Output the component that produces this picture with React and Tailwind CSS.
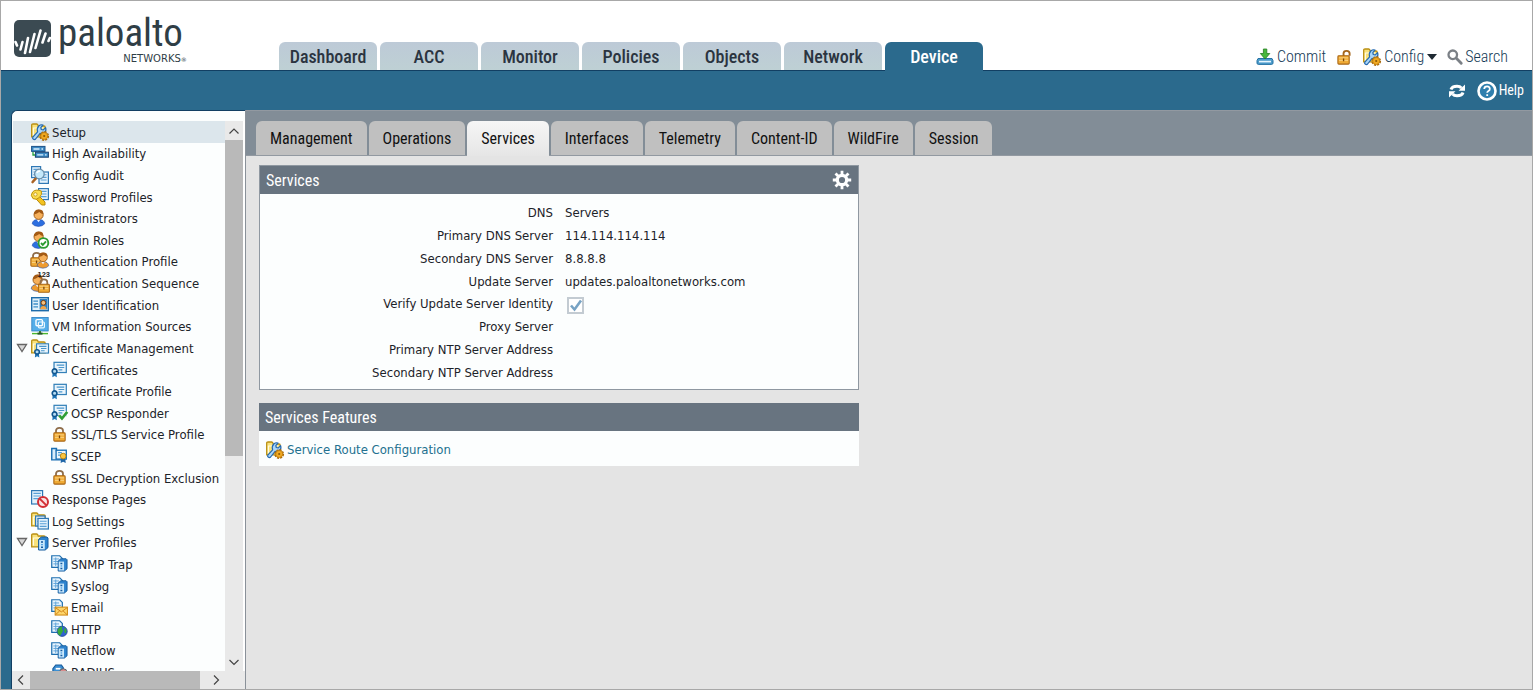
import React from 'react';

/* ---------- icon parts (18 x 18 grid) ---------- */

function Svg({ children, className = 'h-[18px] w-[18px]' }) {
  return (
    <svg viewBox="0 0 18 18" className={`${className} shrink-0 overflow-visible`} fill="none" aria-hidden="true">
      {children}
    </svg>
  );
}

const Folder = () => (
  <>
    <path d="M.7 13.8V2.2Q.7 1 2 1h3.6q1 0 1.4 1.2l.3.8H13q1.200 0 1.200 1.200v9.600z" fill="#f9e27a" stroke="#b98f12" strokeWidth="1.300" />
    <path d="M2.400 12.500V5h10" stroke="#fffbe0" strokeWidth="1.200" />
  </>
);

const Gear = ({ x = 13.2, y = 13 }) => (
  <g transform={`translate(${x} ${y})`}>
    <circle r="3.600" stroke="#a8690a" strokeWidth="2.600" strokeDasharray="1.900 .9" />
    <circle r="3.500" fill="#f1a921" stroke="#c07d0c" strokeWidth=".8" />
    <circle r="1.100" fill="#8d5a05" />
  </g>
);

const Sheet = ({ x = 0, y = 0, w = 10, h = 12 }) => (
  <g transform={`translate(${x} ${y})`}>
    <rect x=".6" y=".6" width={w} height={h} fill="#e4f2fc" stroke="#2f78b5" strokeWidth="1.2" />
    <path d={`M2.4 3.4h${w - 3.6}M2.4 6h${w - 3.6}M2.4 8.6h${w - 3.6}`} stroke="#5aa0d6" strokeWidth="1.1" />
  </g>
);

const Grid = () => (
  <>
    <path d="M.8.8h8.4L12 3.6V13H.8z" fill="#e8f5fe" stroke="#1e6fb0" strokeWidth="1.3" />
    <path d="M2.5 4.2h6M2.5 6.8h8M2.5 9.4h8M5 2.6v9" stroke="#5ba3d9" strokeWidth="1" />
  </>
);

const Server = () => (
  <>
    <path d="M7.600 6.400 10.400 4H16l1 1v9.600L14.200 17H7.600z" fill="#2e84cf" stroke="#155b9c" />
    <path d="M8.200 7h5.600v9.400H8.200z" fill="#c8e7fb" />
    <path d="M10 9h2M10 14.300h2" stroke="#145a9e" strokeWidth="1.400" />
    <path d="M10.200 11.600h1.600" stroke="#3c95dd" strokeWidth="1.200" />
  </>
);

const Ribbon = ({ x = 3.6, y = 11 }) => (
  <g transform={`translate(${x} ${y})`}>
    <path d="M-2 1.5-2.4 6.4 0 5l2.4 1.4L2 1.5z" fill="#1f76b8" />
    <circle r="2.5" fill="#b6dcf3" stroke="#11568f" strokeWidth="1.7" />
  </g>
);

const Cert = ({ x = 0, y = 0 }) => (
  <g transform={`translate(${x} ${y})`}>
    <rect x="3.2" y="1.4" width="13" height="10.8" fill="#eaf5fc" stroke="#3380b8" strokeWidth="1.3" />
    <path d="M6 4.4h8M8 6.9h6M8 9.4h4" stroke="#4a96cb" strokeWidth="1.2" />
    <Ribbon x={3.8} y={10.8} />
  </g>
);

const Person = ({ x = 0, y = 0, shirt = '#2c6fe0', s = 1 }) => (
  <g transform={`translate(${x} ${y}) scale(${s})`}>
    <path d="M1.200 14.800Q1.600 10.400 7.400 10.400t6.300 4.400Q11.600 17.400 7.400 17.400t-6.200-2.600z" fill={shirt} stroke="#1e4aa8" strokeWidth=".6" />
    <path d="M5.400 10.200 7.500 13.200l2.200-3z" fill="#eef4ff" />
    <circle cx="7.600" cy="5.800" r="4.600" fill="#f6b05a" stroke="#9a5710" strokeWidth=".9" />
    <path d="M2.900 5.400Q3 .6 7.800.6t4.600 4.400Q9.800 4.800 8.300 3 6.200 4.800 2.900 5.400z" fill="#a35a14" />
  </g>
);

const Lock = ({ x = 0, y = 0, s = 1, open = false }) => (
  <g transform={`translate(${x} ${y}) scale(${s})`}>
    {open ? (
      <path d="M9 8V4.600Q9 2 12.200 2t3.200 2.800v2.400" stroke="#a5661c" strokeWidth="2" />
    ) : (
      <path d="M5.300 8V5Q5.300 2 9 2t3.700 3v3" stroke="#8f6d4a" strokeWidth="1.900" />
    )}
    <rect x="3" y="7.200" width="12" height="8.800" rx="1" fill="#f0ab35" stroke="#a86412" strokeWidth="1.100" />
    <path d="M4.200 9.400h9.600M4.200 12h9.600" stroke="#fbd689" strokeWidth="1" />
    <path d="M9 10v3" stroke="#7a4508" strokeWidth="1.400" />
  </g>
);

const art = {
  setup: (
    <>
      <Folder />
      <path
        d="M1.800 14.200 6.600 8.800Q5.600 5.200 7.800 3 9.800 1.200 12 2L9.800 4.600l.5 1.900 2 .4L14.600 4.600q1 2.800-.9 4.700-1.900 1.700-4.600 1L4.600 16q-1 1-2.200.2-1.200-1-.6-2z"
        fill="#a9d6fa" stroke="#2468b0" strokeWidth="1.200" strokeLinejoin="round"
      />
      <Gear />
    </>
  ),
  ha: (
    <>
      <rect x=".6" y="2.4" width="13.4" height="5" fill="#3d8ac4" stroke="#1c5288" />
      <path d="M2.5 5h6M10.5 5H12" stroke="#d8f0ff" strokeWidth="1.3" />
      <rect x="4.4" y="8.2" width="13" height="5" fill="#3d8ac4" stroke="#17406f" />
      <path d="M6.2 10.8h6M14 10.8h1.6" stroke="#d8f0ff" strokeWidth="1.3" />
      <path d="M2 8v3h2" stroke="#25a03f" strokeWidth="1.3" />
    </>
  ),
  audit: (
    <>
      <Sheet w={9} h={11} />
      <Sheet x={7.4} y={5.4} w={9.4} h={11.4} />
      <path d="M5.5 11.6 1.6 16" stroke="#aa6324" strokeWidth="2.6" strokeLinecap="round" />
      <circle cx="8.4" cy="8" r="4.8" fill="#c4e8fb" stroke="#6b8faa" strokeWidth="1.3" />
      <path d="M5.8 7Q6.6 5 9 5" stroke="#fff" strokeWidth="1.4" />
    </>
  ),
  password: (
    <>
      <Sheet x={7} y={0} w={9.8} h={11} />
      <path d="M7.800 7.800 14 14v3h-3.400L4.800 10.600z" fill="#f3c321" stroke="#b98b0c" />
      <path d="M10.400 3Q4.400.8 1.600 4T2 10.600q3.400 1.800 6.400-1.100T10.400 3z" fill="#fadc4c" stroke="#bf920d" />
      <circle cx="4.400" cy="6.400" r="1.700" fill="#fff7c9" stroke="#b98b0c" strokeWidth=".7" />
    </>
  ),
  admin: <Person />,
  roles: (
    <>
      <Person />
      <circle cx="12.4" cy="12" r="4.900" fill="#fff" stroke="#2c9c32" strokeWidth="1.900" />
      <path d="m10 12 1.800 1.900 3.200-3.600" stroke="#2c9c32" strokeWidth="1.900" />
    </>
  ),
  authProfile: (
    <>
      <Lock x={-3} y={-1} s={0.95} />
      <Person x={5} y={0} s={0.93} shirt="#ee9a2e" />
    </>
  ),
  authSeq: (
    <>
      <Person x={-1} y={0} s={1} shirt="#ee9a2e" />
      <Lock x={4.6} y={3.6} s={0.92} />
      <text x="6.500" y="3" fontSize="7.500" fontWeight="700" fill="#222" fontFamily="Liberation Sans, sans-serif">123</text>
    </>
  ),
  userId: (
    <>
      <rect x=".7" y="1.7" width="16.6" height="13" fill="#dff0fb" stroke="#1d6cab" strokeWidth="1.4" />
      <path d="M2.4 5.2H7M2.4 8H7M2.4 10.8H7" stroke="#3f8dc7" strokeWidth="1.3" />
      <rect x="8.6" y="3" width="7.6" height="10.4" fill="#2a7fc4" />
      <circle cx="12.4" cy="6.8" r="2.4" fill="#f5c07e" stroke="#7d3d08" />
      <path d="M9.2 13.2q.3-3.2 3.2-3.2t3.2 3.2z" fill="#f3a545" />
    </>
  ),
  vm: (
    <>
      <rect x=".8" y=".4" width="16.400" height="13.600" fill="#55aee9" stroke="#2c7fc0" strokeWidth=".8" />
      <rect x="5" y="2.600" width="6.400" height="6.200" rx="1" stroke="#fff" strokeWidth="1.400" />
      <rect x="7.400" y="5" width="6" height="5.800" rx="1" stroke="#e9f7ff" strokeWidth="1.200" />
      <path d="M9 14v2" stroke="#3d7d2b" strokeWidth="2" />
      <path d="M1 16.600h16" stroke="#4cb52f" strokeWidth="1.400" />
      <path d="M6.500 16.600h5" stroke="#27552a" strokeWidth="2" />
    </>
  ),
  certFolder: (
    <>
      <Folder />
      <g transform="translate(2.600 3.600) scale(.92 .86)">
        <Cert />
      </g>
    </>
  ),
  cert: <Cert />,
  ocsp: (
    <>
      <Cert />
      <path d="m8.6 12 3 3.4 5.6-7" stroke="#fff" strokeWidth="4" />
      <path d="m8.6 12 3 3.4 5.6-7" stroke="#2f9e35" strokeWidth="2.8" />
    </>
  ),
  lock: <Lock />,
  openLock: <Lock open x={-1} />,
  scep: (
    <>
      <path d="M.8 13.6V1.6h5V4h6v9.6z" fill="#d9edfb" stroke="#1a6fb4" strokeWidth="1.5" />
      <rect x="5.4" y="3.4" width="10.8" height="9.4" fill="#eef7fd" stroke="#1a6fb4" strokeWidth="1.4" />
      <path d="M7.5 6h4M7.5 8.6h3" stroke="#4b9bd2" strokeWidth="1.2" />
      <path d="m10.8 11-.6 6 2.6-1.4 2.8 1.4-.6-6z" fill="#1f66a8" />
      <circle cx="12.9" cy="9.6" r="3" fill="#f8c440" stroke="#b98410" />
    </>
  ),
  response: (
    <>
      <Sheet w={11} h={13.4} />
      <circle cx="12" cy="12" r="5" fill="#fbe3e3" stroke="#d32f35" strokeWidth="2" />
      <path d="m8.6 8.6 6.8 6.8" stroke="#d32f35" strokeWidth="2" />
    </>
  ),
  log: (
    <>
      <Folder />
      <Sheet x={4} y={3.4} w={9.4} h={10} />
      <Sheet x={6.4} y={5.8} w={10.4} h={10.6} />
    </>
  ),
  serverFolder: (
    <>
      <Folder />
      <Server />
    </>
  ),
  server: (
    <>
      <Grid />
      <Server />
    </>
  ),
  email: (
    <>
      <Grid />
      <rect x="4.4" y="8.6" width="13" height="8.4" fill="#fdd56a" stroke="#cf8a14" strokeWidth="1.1" />
      <path d="m4.8 9.2 6.2 4.4 6-4.4M4.8 16.6l4.4-4M17 16.6l-4.2-4" stroke="#cf7f14" strokeWidth="1" />
    </>
  ),
  http: (
    <>
      <Grid />
      <circle cx="11.8" cy="12" r="5.4" fill="#2f62d0" stroke="#1c3f91" strokeWidth=".8" />
      <path d="M7 10q2.600-3.600 5-3l-.4 2.400 1.400 1.800-1.800 3-1.400 2.600Q6.400 15.400 7 10zM14 7.600l2.600 3-.8 3.600-1.600-1z" fill="#37ab3c" />
    </>
  ),
  radius: (
    <>
      <path d="M2 16V5l3-4h6l2 3v12z" fill="#3c8fd3" stroke="#155b9c" strokeWidth="1.200" />
      <path d="M5 5h5" stroke="#fff" strokeWidth="1.800" />
      <circle cx="13" cy="9" r="4" fill="#d98b8b" stroke="#566" />
    </>
  ),
};

function Icon({ name, className }) {
  return <Svg className={className}>{art[name]}</Svg>;
}

/* ---------- data ---------- */

const mainTabs = ['Dashboard', 'ACC', 'Monitor', 'Policies', 'Objects', 'Network', 'Device'];
const subTabs = ['Management', 'Operations', 'Services', 'Interfaces', 'Telemetry', 'Content-ID', 'WildFire', 'Session'];

const tree = [
  { label: 'Setup', icon: 'setup', selected: true },
  { label: 'High Availability', icon: 'ha' },
  { label: 'Config Audit', icon: 'audit' },
  { label: 'Password Profiles', icon: 'password' },
  { label: 'Administrators', icon: 'admin' },
  { label: 'Admin Roles', icon: 'roles' },
  { label: 'Authentication Profile', icon: 'authProfile' },
  { label: 'Authentication Sequence', icon: 'authSeq' },
  { label: 'User Identification', icon: 'userId' },
  { label: 'VM Information Sources', icon: 'vm' },
  { label: 'Certificate Management', icon: 'certFolder', open: true },
  { label: 'Certificates', icon: 'cert', child: true },
  { label: 'Certificate Profile', icon: 'cert', child: true },
  { label: 'OCSP Responder', icon: 'ocsp', child: true },
  { label: 'SSL/TLS Service Profile', icon: 'lock', child: true },
  { label: 'SCEP', icon: 'scep', child: true },
  { label: 'SSL Decryption Exclusion', icon: 'lock', child: true },
  { label: 'Response Pages', icon: 'response' },
  { label: 'Log Settings', icon: 'log' },
  { label: 'Server Profiles', icon: 'serverFolder', open: true },
  { label: 'SNMP Trap', icon: 'server', child: true },
  { label: 'Syslog', icon: 'server', child: true },
  { label: 'Email', icon: 'email', child: true },
  { label: 'HTTP', icon: 'http', child: true },
  { label: 'Netflow', icon: 'server', child: true },
  { label: 'RADIUS', icon: 'radius', child: true },
];

const details = [
  ['DNS', 'Servers'],
  ['Primary DNS Server', '114.114.114.114'],
  ['Secondary DNS Server', '8.8.8.8'],
  ['Update Server', 'updates.paloaltonetworks.com'],
  ['Verify Update Server Identity', true],
  ['Proxy Server', ''],
  ['Primary NTP Server Address', ''],
  ['Secondary NTP Server Address', ''],
];

/* ---------- header ---------- */

function Logo() {
  return (
    <a href="#home" className="flex w-[278px] shrink-0 self-start pl-[13px] pt-[13px] text-[#2f3e46]">
      <svg viewBox="0 0 37 37" className="mt-1.5 h-[37px] w-[37px] shrink-0" aria-hidden="true">
        <rect width="37" height="37" rx="5" fill="#3b4a52" />
        <path
          d="M1.500 22l1.500 3.500M8.500 22l-2 7.500M14 18l-3 15M20.500 14l-4.500 18M26.500 10.500l-5 17.500M31.500 13.500l-3 9M35.800 18l-1.300 3"
          stroke="#fff" strokeWidth="2.600" strokeLinecap="round" fill="none"
        />
      </svg>
      <span className="ml-[7px] flex flex-col items-end">
        <span className="pr-1 text-[39px] leading-[38px]">paloalto</span>
        <span className="pt-0.5 font-['DejaVu_Sans'] text-[10px] leading-[10px]">NETWORKS<span className="text-[6px]">®</span></span>
      </span>
    </a>
  );
}

function Header() {
  return (
    <header className="flex h-[70px] shrink-0 items-end border-b border-[#123f63] bg-white">
      <Logo />
      <nav className="flex gap-[3px]">
        {mainTabs.map((tab) => (
          <button
            key={tab}
            className={
              tab === 'Device'
                ? '-mb-px h-[29px] w-[98px] rounded-t-md bg-[#2b6a8d] pt-px text-[18px] font-medium leading-7 text-white'
                : 'h-[28px] w-[98px] rounded-t-md bg-gradient-to-b from-[#bdcad7] to-[#bed0d4] pt-px text-[18px] font-medium leading-7 text-[#2b3440]'
            }
          >
            {tab}
          </button>
        ))}
      </nav>
      <div className="ml-auto flex items-center gap-2.5 pb-px pr-6 text-[16px] font-light leading-6 text-[#143a56]">
        <button className="flex items-center gap-[3px]">
          <Svg>
            <path d="M2 10.500h14l1 2v2.500q0 1.400-1.400 1.400H2.400Q1 16.400 1 15v-2.500z" fill="#4d9ccb" stroke="#2573a5" />
            <path d="M3 13.600h12" stroke="#e6f6ff" strokeWidth="1.600" />
            <path d="M7.400 1h3.400v4.500h3L9 11 4.400 5.500h3z" fill="#48b83c" stroke="#237d20" strokeWidth=".8" />
          </Svg>
          Commit
        </button>
        <button aria-label="Locks"><Icon name="openLock" className="h-[17px] w-[17px]" /></button>
        <button className="flex items-center gap-[3px]">
          <Icon name="setup" />
          Config
          <svg viewBox="0 0 10 6" className="h-1.5 w-2.5" aria-hidden="true"><path d="M0 0h10L5 6z" fill="#1f2a33" /></svg>
        </button>
        <button className="flex items-center gap-0.5">
          <Svg className="h-4 w-4">
            <circle cx="6.500" cy="6.500" r="4.800" stroke="#7b8086" strokeWidth="2.600" />
            <path d="m10.500 10.500 5.500 5.500" stroke="#7b8086" strokeWidth="3.200" strokeLinecap="round" />
          </Svg>
          Search
        </button>
      </div>
    </header>
  );
}

function Toolbar() {
  return (
    <div className="flex h-[39px] shrink-0 items-center justify-end gap-3 bg-[#2b6a8d] pr-2 text-[14px] text-white">
      <button aria-label="Refresh">
        <svg viewBox="0 0 16 14" className="h-3.5 w-4" fill="none" aria-hidden="true">
          <path d="M2 5.500Q3 2.200 8 2.200q3 0 4.400 1.800M14 8.500q-1 3.300-6 3.300-3 0-4.400-1.800" stroke="#fff" strokeWidth="3" />
          <path d="M16 .5v6.300H9.500zM0 13.500V7.200h6.500z" fill="#fff" />
        </svg>
      </button>
      <button className="flex items-center gap-0.5">
        <svg viewBox="0 0 20 20" className="h-5 w-5" aria-hidden="true">
          <circle cx="10" cy="10" r="8.500" fill="#2f7fae" stroke="#fff" strokeWidth="2.600" />
          <path d="M7.200 8q.2-2.600 2.900-2.600T12.800 8q0 1.300-1.400 2-1.200.7-1.200 1.800M10.200 13.200v1.800" stroke="#fff" strokeWidth="1.800" fill="none" />
        </svg>
        Help
      </button>
    </div>
  );
}

/* ---------- sidebar ---------- */

function Chevron({ d, label, className }) {
  return (
    <button aria-label={label} className={`flex items-center justify-center ${className}`}>
      <svg viewBox="0 0 12 12" className="h-3 w-3" fill="none" aria-hidden="true">
        <path d={d} stroke="#444" strokeWidth="1.200" />
      </svg>
    </button>
  );
}

function Sidebar() {
  return (
    <aside className="flex w-[234px] shrink-0 flex-col rounded-tl-md border-l border-t border-[#123f63] bg-[#fcfefe] pt-2.5">
      <div className="flex min-h-0 flex-1">
        <nav className="min-w-0 flex-1 overflow-hidden pl-px">
          <ul className="flex h-[562px] flex-col font-['DejaVu_Sans_Condensed','Open_Sans',sans-serif] text-[13px] text-[#1d2329]">
            {tree.map((item) => (
              <li key={item.label} className={item.selected ? 'flex flex-1 items-center bg-[#dce6ec]' : 'flex flex-1 items-center'}>
                <span className={item.child ? 'w-[38px] shrink-0' : 'flex w-[18px] shrink-0 pl-[3px]'}>
                  {item.open && (
                    <svg viewBox="0 0 12 10" className="h-2.5 w-3" aria-hidden="true">
                      <path d="M1.500 1.500h9L6 8.500z" fill="#d8d8d8" stroke="#666" strokeWidth="1.300" />
                    </svg>
                  )}
                </span>
                <a href="#tree" className="flex items-center gap-[3px] whitespace-nowrap leading-[18px]">
                  <Icon name={item.icon} className={item.child ? 'h-[17px] w-[17px]' : 'h-[18px] w-[18px]'} />
                  <span className="pt-0.5">{item.label}</span>
                </a>
              </li>
            ))}
          </ul>
        </nav>
        <div className="flex w-[18px] shrink-0 flex-col bg-[#e9e9e9]">
          <Chevron label="Scroll up" d="M1.500 8.500 6 4l4.500 4.500" className="h-[19px]" />
          <div className="h-[316px] bg-[#b9b9b9]" />
          <Chevron label="Scroll down" d="M1.500 4 6 8.500 10.500 4" className="mt-auto h-[19px]" />
        </div>
        <div className="w-0.5 bg-white" />
      </div>
      <div className="flex h-[18px] shrink-0 bg-[#e9e9e9]">
        <Chevron label="Scroll left" d="M8 1.500 3.500 6 8 10.500" className="w-[18px]" />
        <div className="w-[170px] bg-[#b9b9b9]" />
        <Chevron label="Scroll right" d="M4 1.500 8.500 6 4 10.500" className="ml-auto mr-5 w-[18px]" />
      </div>
    </aside>
  );
}

/* ---------- content ---------- */

function PanelHeader({ title, children }) {
  return (
    <div className="flex h-7 items-center justify-between bg-[#687480] px-1.5">
      <h2 className="pt-0.5 text-[16px] leading-6 text-white">{title}</h2>
      {children}
    </div>
  );
}

function Content() {
  return (
    <main className="min-w-0 flex-1 bg-[#e4e4e4]">
      <nav className="flex h-[46px] items-end gap-0.5 border-b border-t border-[#9299a1] bg-[#828d97] pl-2.5">
        {subTabs.map((tab) => (
          <button
            key={tab}
            className={
              tab === 'Services'
                ? '-mb-px h-[35px] rounded-t-md bg-gradient-to-b from-[#f6f6f6] to-[#e6e6e6] px-3.5 pt-px text-[16px] text-[#111]'
                : 'h-[34px] rounded-t-md bg-[#c0c0c0] px-3.5 pt-0.5 text-[16px] text-[#111]'
            }
          >
            {tab}
          </button>
        ))}
      </nav>
      <div className="flex max-w-[626px] flex-col gap-[13px] px-[13px] pt-[9px]">
        <section className="border border-[#8f98a1] bg-[#fcfefe]">
          <PanelHeader title="Services">
            <button aria-label="Edit services">
              <svg viewBox="0 0 20 20" className="h-5 w-5" fill="none" aria-hidden="true">
                <circle cx="10" cy="10" r="4.700" stroke="#fff" strokeWidth="3.200" />
                <path d="M10 .8v4M10 15.200v4M.8 10h4M15.200 10h4M3.500 3.500l2.800 2.800M13.700 13.700l2.800 2.800M3.500 16.500l2.800-2.800M13.700 6.300l2.800-2.800" stroke="#fff" strokeWidth="2.800" />
              </svg>
            </button>
          </PanelHeader>
          <dl className="mb-[5px] mt-[8px] flex h-[182px] flex-col font-['DejaVu_Sans_Condensed','Open_Sans',sans-serif] text-[13px] text-[#1d2329]">
            {details.map(([label, value]) => (
              <div key={label} className="flex flex-1 items-center gap-3 leading-5">
                <dt className="w-[293px] text-right">
                  {value === true ? <label htmlFor="verify">{label}</label> : label}
                </dt>
                <dd>
                  {value === true ? (
                    <span className="relative ml-0.5 mt-0.5 flex h-[17px] w-[17px]">
                      <input id="verify" type="checkbox" defaultChecked disabled className="h-[17px] w-[17px] appearance-none border-2 border-[#c3cbd2] bg-white" />
                      <svg viewBox="0 0 17 17" className="pointer-events-none absolute inset-0" fill="none" aria-hidden="true">
                        <path d="m4 8.500 3.500 4L14 3.500" stroke="#78a3c4" strokeWidth="2.600" />
                      </svg>
                    </span>
                  ) : (
                    value
                  )}
                </dd>
              </div>
            ))}
          </dl>
        </section>
        <section className="bg-[#fcfefe]">
          <PanelHeader title="Services Features" />
          <a href="#route" className="flex h-[35px] items-center gap-[3px] px-[7px] pt-0.5 font-['DejaVu_Sans_Condensed','Open_Sans',sans-serif] text-[13px] text-[#22708f]">
            <Icon name="setup" />
            Service Route Configuration
          </a>
        </section>
      </div>
    </main>
  );
}

export default function App() {
  return (
    <div className="flex h-screen flex-col border border-[#a8a8a8] bg-[#2b6a8d] font-['Roboto_Condensed','Liberation_Sans_Narrow','Liberation_Sans',sans-serif]">
      <Header />
      <Toolbar />
      <div className="flex min-h-0 flex-1 pl-2.5">
        <Sidebar />
        <div className="flex w-px shrink-0 items-center bg-[#8a9199] pt-6">
          <button aria-label="Collapse sidebar" className="h-8 w-[5px] shrink-0">
            <svg viewBox="0 0 5 8" className="h-2 w-[5px]" aria-hidden="true"><path d="M4.500 0v8L.5 4z" fill="#777" /></svg>
          </button>
        </div>
        <Content />
      </div>
    </div>
  );
}
